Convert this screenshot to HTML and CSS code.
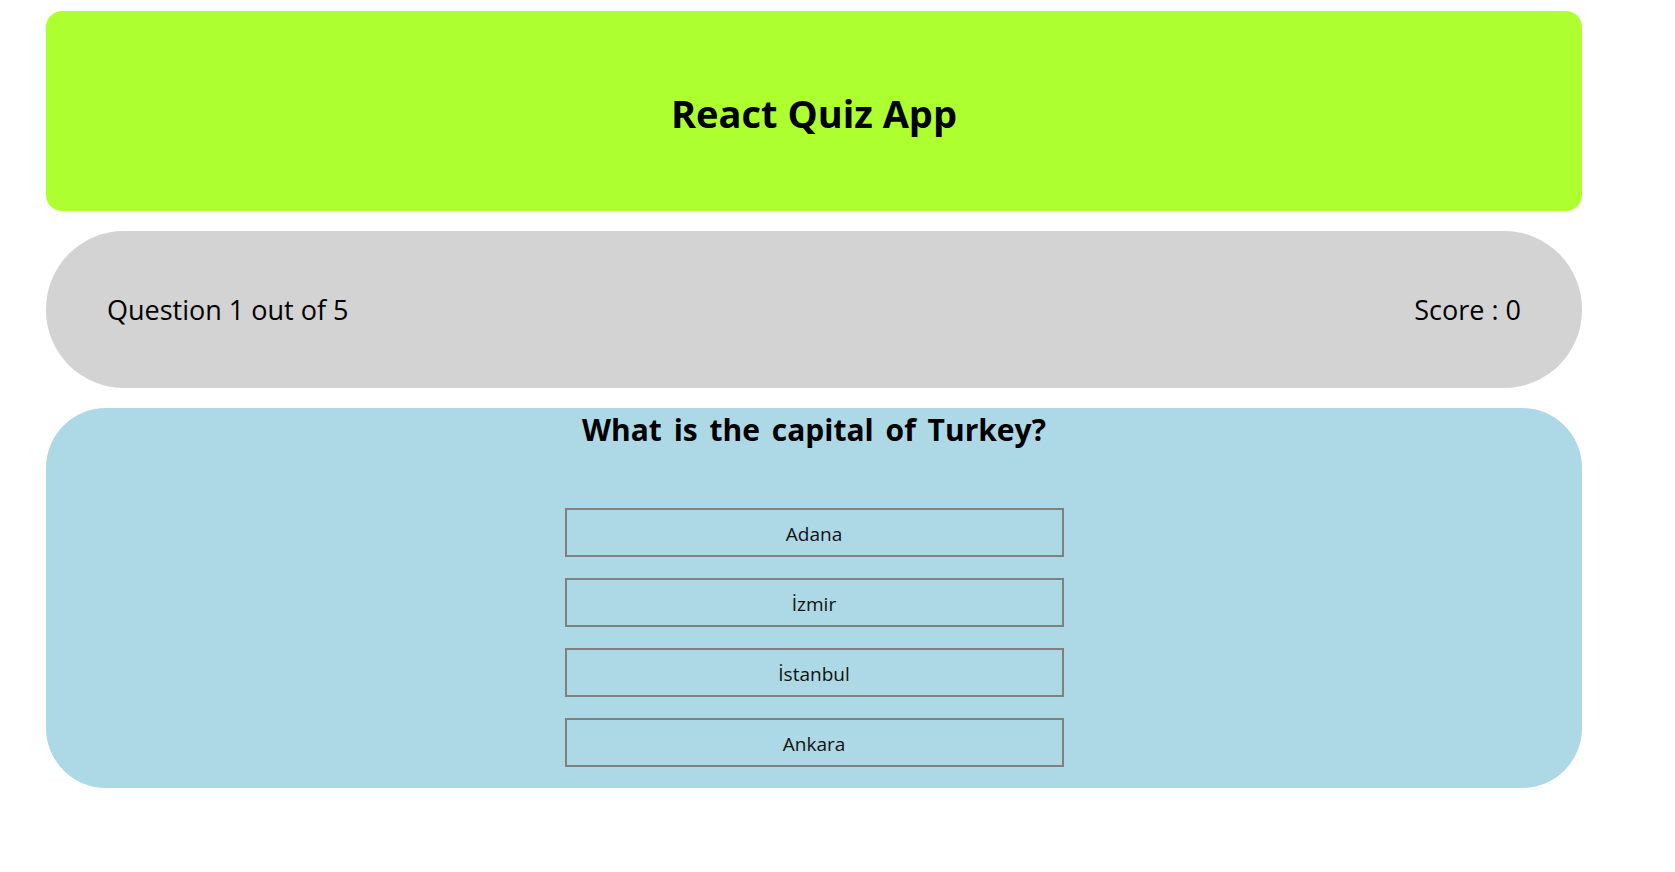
FILE: index.html
```html
<!DOCTYPE html>
<html lang="en">
<head>
<meta charset="utf-8">
<title>React Quiz App</title>
<link rel="stylesheet" href="styles.css">
</head>
<body>
<div class="app">
  <header class="header">
    <h1 class="title">React Quiz App</h1>
  </header>
  <section class="status">
    <span class="status-text">Question 1 out of 5</span>
    <span class="status-text">Score : 0</span>
  </section>
  <section class="quiz">
    <h2 class="question">What is the capital of Turkey?</h2>
    <div class="answers">
      <button class="answer">Adana</button>
      <button class="answer">İzmir</button>
      <button class="answer">İstanbul</button>
      <button class="answer">Ankara</button>
    </div>
  </section>
</div>
</body>
</html>
```
FILE: styles.css
```css
html, body {
  margin: 0;
  padding: 0;
  background: #ffffff;
}

body {
  font-family: "Open Sans", "Noto Sans", "Liberation Sans", sans-serif;
  color: #000;
}

.app {
  width: 1536px;
  margin-left: 46px;
  padding-top: 11px;
  display: flex;
  flex-direction: column;
  gap: 20px;
}

.header {
  height: 200px;
  background: #adff2f;
  border-radius: 16px;
  display: flex;
  align-items: center;
  justify-content: center;
}

.title {
  margin: 0;
  padding-top: 4px;
  font-size: 38px;
  font-weight: 700;
  line-height: 1;
}

.status {
  height: 157px;
  background: #d3d3d3;
  border-radius: 78px;
  padding: 0 61px;
  display: flex;
  align-items: center;
  justify-content: space-between;
}

.status-text {
  font-size: 27px;
  font-weight: 500;
}

.quiz {
  background: #add8e6;
  border-radius: 60px;
  height: 380px;
  box-sizing: border-box;
  display: flex;
  flex-direction: column;
  align-items: center;
}

.question {
  margin: 0;
  font-size: 30px;
  font-weight: 700;
  line-height: 43px;
  word-spacing: 4px;
}

.answers {
  margin-top: 57px;
  display: flex;
  flex-direction: column;
  gap: 21px;
}

.answer {
  width: 499px;
  height: 49px;
  background: #add8e6;
  border: 2px solid #808080;
  font-family: "Open Sans", "Noto Sans", "Liberation Sans", sans-serif;
  font-size: 19px;
  color: #111;
  padding: 3px 0 0;
}
```
